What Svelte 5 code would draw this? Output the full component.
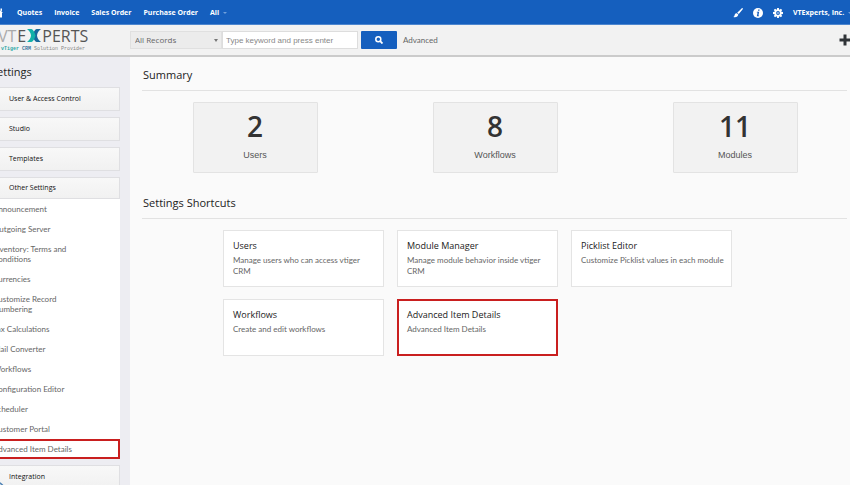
<script>
  const modules = ['Quotes', 'Invoice', 'Sales Order', 'Purchase Order'];
  const blocks = ['User & Access Control', 'Studio', 'Templates'];
  const settings = [
    'Announcement', 'Outgoing Server', 'Inventory: Terms and Conditions', 'Currencies',
    'Customize Record Numbering', 'Tax Calculations', 'Mail Converter', 'Workflows',
    'Configuration Editor', 'Scheduler', 'Customer Portal', 'Advanced Item Details'
  ];
  const stats = [
    { count: 2, label: 'Users' },
    { count: 8, label: 'Workflows' },
    { count: 11, label: 'Modules' }
  ];
  const shortcuts = [
    { title: 'Users', text: 'Manage users who can access vtiger CRM' },
    { title: 'Module Manager', text: 'Manage module behavior inside vtiger CRM' },
    { title: 'Picklist Editor', text: 'Customize Picklist values in each module' },
    { title: 'Workflows', text: 'Create and edit workflows' },
    { title: 'Advanced Item Details', text: 'Advanced Item Details', marked: true }
  ];
  const teeth = [0, 45, 90, 135, 180, 225, 270, 315];
</script>

<div class="page">
  <nav class="topbar">
    <a class="home" href="#home" aria-label="Home">
      <svg width="10" height="10" viewBox="0 0 10 10" fill="#fff"><path d="M5 0 10 5H9v4.500H6V6.500H4v3H1V5H0zM7.500.5H9v3L7.500 2z" /></svg>
    </a>
    {#each modules as name}
      <a href="#module">{name}</a>
    {/each}
    <a href="#all" class="more">All <i class="caret"></i></a>
    <div class="tools">
      <button aria-label="Theme">
        <svg width="10" height="10" viewBox="0 0 10 10" fill="#fff"><path d="M9.600.2c.4.200.4.600.1 1L5.800 6 4.200 4.800 8.600.5c.3-.3.7-.5 1-.3zM3.700 5.200 5.300 6.500C5.200 8.600 2.800 9.700.3 8.900c1.300-.5 1-1.300 1.500-2.500.4-.9 1.100-1.300 1.900-1.200z" /></svg>
      </button>
      <button aria-label="Information">
        <svg width="10" height="10" viewBox="0 0 10 10"><circle cx="5" cy="5" r="5" fill="#fff" /><path d="M5.200 1.500h1.400L6.400 2.800H5zM3.900 3.800h2.300L5.400 7.400h.7L5.900 8.300H3.800l.8-3.700h-.8z" fill="#155fbe" /></svg>
      </button>
      <button aria-label="Settings">
        <svg width="10" height="10" viewBox="0 0 10 10">
          <g fill="#fff">
            {#each teeth as angle}
              <path d="M4.100 0h1.800l.3 2H3.800z" transform="rotate({angle} 5 5)" />
            {/each}
          </g>
          <circle cx="5" cy="5" r="2.700" fill="none" stroke="#fff" stroke-width="1.600" />
          <circle cx="5" cy="5" r=".8" fill="#fff" />
        </svg>
      </button>
      <a href="#account">VTExperts, Inc. <i class="caret"></i></a>
    </div>
  </nav>

  <header class="searchbar">
    <a class="logo" href="#home" aria-label="VTExperts">
      <span class="word"><span class="pale">VT</span>E<svg width="14" height="13" viewBox="0 0 14 13"><path d="M14 0H9.500C7.600.8 6.600 3 5.500 6.500 6.600 10 7.600 12.200 9.500 13H14c-2.500-1.800-3.800-4-4-6.500.2-2.500 1.500-4.700 4-6.500z" fill="#17699c" /><path d="M0 0h4.500c1.900.8 2.900 3 4 6.500-1.100 3.500-2.100 5.700-4 6.500H0c2.500-1.800 3.800-4 4-6.500C3.800 4 2.500 1.800 0 0z" fill="#12b0a8" /></svg>PERTS</span>
      <span class="tag"><b>vTiger</b> <b class="crm">CRM</b> Solution Provider</span>
    </a>
    <form class="search" onsubmit={(e) => e.preventDefault()}>
      <span class="pick">
        <select aria-label="Records to search"><option>All Records</option></select>
        <i class="arrow"></i>
      </span>
      <input type="text" aria-label="Keyword" placeholder="Type keyword and press enter" />
      <button aria-label="Search">
        <svg width="8" height="8" viewBox="0 0 8 8" fill="none" stroke="#fff" stroke-width="1.500"><circle cx="3.300" cy="3.300" r="2.500" /><path d="m5.200 5.200 2.300 2.300" stroke-width="1.800" /></svg>
      </button>
      <a href="#advanced">Advanced</a>
    </form>
    <button class="add" aria-label="Quick create">
      <svg width="12" height="12" viewBox="0 0 12 12"><path d="M6 .5v11M.5 6h11" stroke="#303438" stroke-width="3" /></svg>
    </button>
  </header>

  <div class="body">
    <aside>
      <h2>Settings</h2>
      {#each blocks as name}
        <button class="block">{name}</button>
      {/each}
      <section class="open">
        <button class="block">Other Settings</button>
        <ul>
          {#each settings as name, i}
            <li class:marked={i === settings.length - 1}><a href="#setting">{name}</a></li>
          {/each}
        </ul>
      </section>
      <button class="block">Integration</button>
    </aside>

    <main>
      <h2>Summary</h2>
      <div class="stats">
        {#each stats as s}
          <a class="stat" href="#stat"><strong>{s.count}</strong><span>{s.label}</span></a>
        {/each}
      </div>
      <h2>Settings Shortcuts</h2>
      <div class="cards">
        {#each shortcuts as card}
          <a class="card" class:marked={card.marked} href="#shortcut">
            <h3>{card.title}</h3>
            <p>{card.text}</p>
          </a>
        {/each}
      </div>
    </main>
  </div>
  <svg class="status" width="28" height="28" viewBox="0 0 28 28"><circle cx="14" cy="14" r="13" fill="#dfe5eb" stroke="#4f83b5" stroke-width="1.500" /></svg>
</div>

<style>
  :global(body) { margin: 0; overflow: hidden; }
  * { box-sizing: border-box; }
  a { color: inherit; text-decoration: none; }
  button { font: inherit; color: inherit; border: 0; padding: 0; background: none; }
  svg { display: block; flex: none; }
  .page {
    display: flex; flex-direction: column; min-height: 100vh; margin: 0 -5px 0 -20px;
    font: 8px/10px "Open Sans", "Noto Sans", sans-serif; color: #555; background: #fafafa;
  }
  .topbar {
    display: flex; align-items: center; gap: 12px; height: 25px; padding-left: 13px; padding-top: 1px;
    background: #155fbe; border-bottom: 1px solid #4d86cf;
    color: #fff; font-size: 7px; font-weight: 700;
  }
  .home { margin-right: 2px; }
  .caret { display: inline-block; margin-left: 2px; border: 2px solid transparent; border-top-color: #6fa0dc; border-bottom: 0; vertical-align: middle; }
  .tools { display: flex; align-items: center; gap: 10px; margin-left: auto; padding-right: 3px; }
  .searchbar {
    display: flex; align-items: center; height: 32px;
    background: #f2f2f2; border-bottom: 2px solid #cbcbcb;
  }
  .logo { width: 132px; margin-left: 18px; }
  .word { display: flex; align-items: center; gap: 1px; font: 16px/16px "Open Sans", sans-serif; color: #555; }
  .pale { color: #aaa; }
  .tag { display: block; margin: 1px 0 0 3px; font: 5px/8px "Liberation Mono", monospace; color: #888; white-space: nowrap; }
  .tag b { color: #2ba7a5; }
  .tag .crm { color: #41799d; }
  .search { display: flex; align-items: center; }
  .pick { position: relative; display: flex; }
  select {
    appearance: none; width: 92px; height: 18px; padding: 0 5px 2px 4px; border: 1px solid #e0e0e0; border-radius: 0;
    background: #ececec; color: #666; font: 8px "Open Sans", sans-serif;
  }
  .arrow { position: absolute; right: 4px; top: 8px; border: 2px solid transparent; border-top: 3px solid #777; border-bottom: 0; }
  input {
    width: 136px; height: 18px; padding: 0 3px; border: 1px solid #ddd;
    font: 8px "Liberation Sans", sans-serif;
  }
  input::placeholder { color: #888; }
  .search button { display: grid; place-items: center; width: 36px; height: 18px; margin: 0 6px 0 3px; background: #155fbe; border-radius: 1px; }
  .add { margin-left: auto; margin-right: 4px; }

  .body { display: flex; flex: 1; }
  aside { flex: none; width: 150px; padding: 8px 10px 0 0; background: #ededf2; }
  h2 { margin: 0; color: #222; font-size: 11px; line-height: 14px; font-weight: 500; }
  aside h2 { padding: 0 11px; margin-bottom: 8px; }
  .block {
    display: block; width: 100%; height: 24px; padding: 0 28px; margin-bottom: 6px; text-align: left;
    border: 1px solid #dfdfe2; background: linear-gradient(#f8f8f8, #f1f1f1); color: #111; font-size: 7px; font-weight: 500;
  }
  .open { margin-bottom: 6px; }
  .open .block { height: 22px; margin: 0; }
  ul { margin: 0; padding: 0; list-style: none; background: #fff; }
  ul, p, .search > a { font-family: Lato, "Open Sans", sans-serif; color: #666; }
  li { padding: 5px 45px 5px 13px; }
  li.marked { padding: 3px 11px; border: 2px solid #c91f1f; }

  main { flex: 1; min-width: 0; padding: 11px 0 0 5px; }
  main h2 { margin: 0 8px 0 7px; padding: 0 1px 8px; border-bottom: 1px solid #e2e2e2; }
  .stats { display: grid; grid-template-columns: repeat(3, 1fr); justify-items: center; padding: 11px 0 23px; }
  .stat {
    display: flex; flex-direction: column; align-items: center; width: 125px; height: 71px; padding-top: 7px;
    background: #f2f2f2; border: 1px solid #e3e3e3; border-radius: 1px;
  }
  strong { color: #333; font-size: 28px; line-height: 32px; font-weight: 600; }
  .stat span { margin-top: 8px; font: 9px/10px "Liberation Sans", sans-serif; }
  .cards { display: flex; flex-wrap: wrap; gap: 12px 13px; padding: 11px 100px 12px 88px; }
  .card { width: 161px; height: 57px; padding: 9px 5px 0 9px; border: 1px solid #e4e4e4; background: #fff; }
  h3 { margin: 0; color: #222; font-size: 9px; line-height: 12px; font-weight: 500; }
  p { margin: 3px 0 0; line-height: 11px; }
  .card.marked { border: 2px solid #c91f1f; padding: 8px 4px 0 8px; }
  .status { position: fixed; left: -21px; bottom: -23px; }
</style>
